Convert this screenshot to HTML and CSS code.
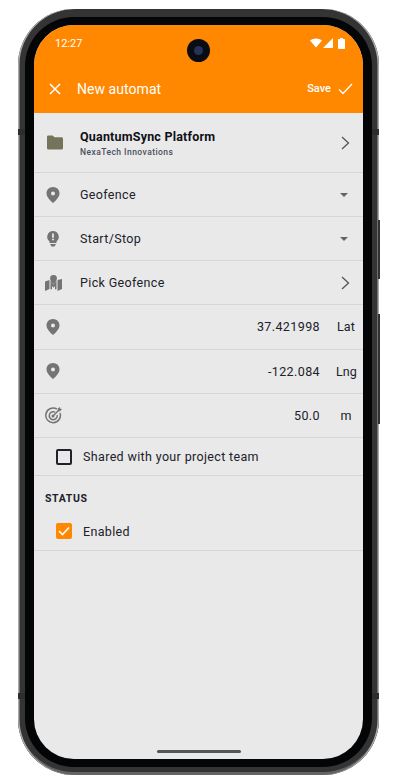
FILE: index.html
```html
<!DOCTYPE html>
<html lang="en">

<head>
    <meta charset="UTF-8">
    <meta name="viewport" content="width=device-width, initial-scale=1.0">
    <title>New automat</title>
    <link rel="stylesheet" href="styles.css">
</head>

<body>
    <div class="phone">
        <span class="tick tickLeftTop"></span>
        <span class="tick tickRightTop"></span>
        <span class="tick tickLeftBottom"></span>
        <span class="tick tickRightBottom"></span>
        <span class="sideBttn powerBttn"></span>
        <span class="sideBttn volumeBttn"></span>
        <div class="bezel">
            <main class="screen">
                <header class="appBar">
                    <div class="statusBar">
                        <span class="clock">12:27</span>
                        <span class="camera"><span class="lens"></span></span>
                        <span class="statusIcons">
                            <svg class="wifiIcon" width="12" height="10" viewBox="0 0 13 10"><path d="M0 2.200C3.600-.7 9.400-.7 13 2.200L6.500 10z" fill="#fff"/></svg>
                            <svg class="signalIcon" width="10" height="10" viewBox="0 0 10 10"><path d="M10 0v10H0z" fill="#fff"/></svg>
                            <svg width="7" height="11" viewBox="0 0 7 11"><path d="M2 1V0h3v1h1.200q.8 0 .8.800V10.200q0 .8-.8.800H.8q-.8 0-.8-.8V1.800Q0 1 .8 1z" fill="#fff"/></svg>
                        </span>
                    </div>
                    <div class="toolBar">
                        <svg class="closeIcon" width="12" height="12" viewBox="0 0 12 12"><path d="M1 1l10 10M11 1L1 11" stroke="#fff" stroke-width="1.500" fill="none"/></svg>
                        <span class="barTitle">New automat</span>
                        <span class="saveLabel">Save</span>
                        <svg class="saveIcon" width="15" height="12" viewBox="0 0 15 12"><path d="M1 6.500L5 10.500L14 1" stroke="#fff" stroke-width="1.300" fill="none"/></svg>
                    </div>
                </header>

                <section class="row projectRow">
                    <svg class="rowIcon folderIcon" width="16" height="15" viewBox="0 0 17 15"><path d="M1.500 0H6l2 2h7.500Q17 2 17 3.500v10q0 1.500-1.500 1.500h-14Q0 15 0 13.500v-12Q0 0 1.500 0z" fill="#74745a"/></svg>
                    <div class="rowBody">
                        <div class="projectName">QuantumSync Platform</div>
                        <div class="projectOrg">NexaTech Innovations</div>
                    </div>
                    <svg class="chevron" width="9" height="14" viewBox="0 0 9 14"><path d="M1 1l6.500 6L1 13" stroke="#555" stroke-width="1.300" fill="none"/></svg>
                </section>

                <section class="row">
                    <svg class="rowIcon pinIcon" width="14" height="16" viewBox="0 0 14 16"><path class="pin" fill-rule="evenodd" d="M7 0c3.700 0 6.500 2.800 6.500 6.300C13.500 10 10 13.500 7 16 4 13.500.5 10 .5 6.300.5 2.800 3.300 0 7 0zm0 4.400a2 2 0 1 0 0 4 2 2 0 0 0 0-4z"/></svg>
                    <span class="rowBody rowLabel">Geofence</span>
                    <span class="caret"></span>
                </section>

                <section class="row">
                    <svg class="rowIcon pinIcon" width="14" height="16" viewBox="0 0 14 16"><path class="pin" fill-rule="evenodd" d="M7 0a5.800 5.800 0 0 1 3.500 10.400V12h-7v-1.600A5.800 5.800 0 0 1 7 0zM6.100 2.600v4.200h1.800V2.600zm0 5.200v1.500h1.800V7.800zM4 13h6l-1.500 2.500h-3z"/></svg>
                    <span class="rowBody rowLabel">Start/Stop</span>
                    <span class="caret"></span>
                </section>

                <section class="row">
                    <svg class="rowIcon wideIcon" width="17" height="16" viewBox="0 0 17 16"><path class="pin" d="M0 6.500l4.500-1.500v9L0 16zM12.500 5l4.500-1v10l-4.500 2zM5.500 5.500l3 4 3-4V14l-1.500.6V11L8.500 12.800 7 11v3.600l-1.500-.6z"/><path class="pin" d="M8.500 0a3.400 3.400 0 0 1 3.400 3.400c0 2-1.900 4.200-3.400 5.600C7 7.600 5.100 5.400 5.100 3.400A3.400 3.400 0 0 1 8.500 0z"/></svg>
                    <span class="rowBody rowLabel">Pick Geofence</span>
                    <svg class="chevron" width="9" height="14" viewBox="0 0 9 14"><path d="M1 1l6.500 6L1 13" stroke="#555" stroke-width="1.300" fill="none"/></svg>
                </section>

                <section class="row latRow">
                    <svg class="rowIcon pinIcon" width="14" height="16" viewBox="0 0 14 16"><path class="pin" fill-rule="evenodd" d="M7 0c3.700 0 6.500 2.800 6.500 6.300C13.500 10 10 13.500 7 16 4 13.500.5 10 .5 6.300.5 2.800 3.300 0 7 0zm0 4.400a2 2 0 1 0 0 4 2 2 0 0 0 0-4z"/></svg>
                    <span class="rowBody rowValue">37.421998</span>
                    <span class="rowUnit">Lat</span>
                </section>

                <section class="row lngRow">
                    <svg class="rowIcon pinIcon" width="14" height="16" viewBox="0 0 14 16"><path class="pin" fill-rule="evenodd" d="M7 0c3.700 0 6.500 2.800 6.500 6.300C13.500 10 10 13.500 7 16 4 13.500.5 10 .5 6.300.5 2.800 3.300 0 7 0zm0 4.400a2 2 0 1 0 0 4 2 2 0 0 0 0-4z"/></svg>
                    <span class="rowBody rowValue">-122.084</span>
                    <span class="rowUnit">Lng</span>
                </section>

                <section class="row">
                    <svg class="rowIcon wideIcon" width="17" height="17" viewBox="0 0 17 17"><g fill="none" stroke="#747474" stroke-width="1.500"><path d="M12 2.200A7.300 7.300 0 1 0 15 6"/><path d="M10.200 5.200A4 4 0 1 0 12.200 8"/><path d="M8 9l7-7"/></g><circle class="pin" cx="8" cy="9" r="1.500"/><path class="pin" d="M12.800 1.500L15 0l.3 1.700L17 2l-2 2.200h-2.200z"/></svg>
                    <span class="rowBody rowValue">50.0</span>
                    <span class="rowUnit">m</span>
                </section>

                <section class="row checkRow">
                    <span class="checkBox"></span>
                    <span class="rowLabel">Shared with your project team</span>
                </section>

                <h2 class="groupTitle">STATUS</h2>

                <section class="row checkRow enabledRow">
                    <span class="checkBox checked">
                        <svg width="12" height="10" viewBox="0 0 12 10"><path d="M1 5l3.500 3.500L11 1.500" stroke="#fff" stroke-width="1.600" fill="none"/></svg>
                    </span>
                    <span class="rowLabel">Enabled</span>
                </section>

                <div class="homeBar"></div>
            </main>
        </div>
    </div>
</body>

</html>
```

FILE: styles.css
```css
* {
    box-sizing: border-box;
}

body {
    margin: 0;
    background-color: rgb(255, 255, 255);
    font-family: Roboto, "Liberation Sans", sans-serif;
    color: rgb(32, 33, 42);
}

.phone {
    position: relative;
    width: 361px;
    height: 766px;
    margin: 9px 0 0 18px;
    padding: 8px 7px;
    border-radius: 56px;
    background-color: rgb(52, 52, 52);
    box-shadow: inset 1.5px 0 0 rgb(170, 170, 170), inset -1.5px 0 0 rgb(170, 170, 170), inset 0 -3px 0 rgb(100, 100, 100);
}

.bezel {
    height: 100%;
    padding: 8px 9px;
    border-radius: 49px;
    background-color: rgb(4, 5, 7);
}

.screen {
    position: relative;
    display: flex;
    flex-direction: column;
    height: 100%;
    overflow: hidden;
    border-radius: 40px;
    background-color: rgb(233, 233, 233);
}

/* small marks and buttons on the frame */
.tick {
    position: absolute;
    width: 7px;
    height: 6px;
    background-color: rgb(45, 45, 45);
}

.tickLeftTop { left: 0; top: 120px; }
.tickRightTop { right: 0; top: 120px; }
.tickLeftBottom { left: 0; top: 684px; }
.tickRightBottom { right: 0; top: 684px; }

.sideBttn {
    position: absolute;
    right: -1px;
    width: 2px;
    background-color: rgb(50, 50, 50);
}

.powerBttn { top: 211px; height: 59px; }
.volumeBttn { top: 305px; height: 110px; }

/* orange header */
.appBar {
    flex: none;
    height: 88px;
    background-color: rgb(255, 136, 0);
    color: rgb(255, 255, 255);
}

.statusBar {
    position: relative;
    display: flex;
    align-items: center;
    justify-content: space-between;
    height: 36px;
    padding: 0 18px 0 21px;
}

.clock {
    font-size: 11px;
}

.camera {
    position: absolute;
    left: 153px;
    top: 14px;
    display: flex;
    align-items: center;
    justify-content: center;
    width: 23px;
    height: 23px;
    border-radius: 50%;
    background-color: rgb(10, 12, 20);
}

.lens {
    width: 9px;
    height: 9px;
    border-radius: 50%;
    background-color: rgb(38, 50, 92);
}

.statusIcons {
    display: flex;
    align-items: center;
}

.wifiIcon {
    margin-right: 1px;
}

.signalIcon {
    margin-right: 5px;
}

.toolBar {
    display: flex;
    align-items: center;
    height: 52px;
    padding: 3px 7px 0 15px;
}

.closeIcon {
    margin-right: 16px;
}

.barTitle {
    flex: 1;
    font-size: 14px;
    letter-spacing: 0.05px;
}

.saveLabel {
    margin-right: 7px;
    font-size: 11px;
    font-weight: 500;
}

.saveIcon {
    margin-right: 3px;
}

/* rows */
.row {
    flex: none;
    display: flex;
    align-items: center;
    height: 44px;
    padding: 0 7px 0 11px;
    border-bottom: 1px solid rgb(214, 214, 214);
}

.projectRow {
    height: 60px;
}

.latRow {
    height: 45px;
    padding-bottom: 1px;
}

.lngRow {
    padding-bottom: 1px;
}

.rowIcon {
    flex: none;
}

.folderIcon {
    margin: 0 17px 0 2px;
}

.pinIcon {
    margin: 0 20px 0 1px;
}

.wideIcon {
    margin-right: 18px;
}

.rowBody {
    flex: 1;
}

.pin {
    fill: rgb(116, 116, 116);
}

.projectName {
    font-size: 12.5px;
    font-weight: 700;
    letter-spacing: 0.2px;
    color: rgb(15, 16, 24);
}

.projectOrg {
    margin-top: 3px;
    font-size: 8.5px;
    font-weight: 500;
    letter-spacing: 0.45px;
    color: rgb(75, 78, 92);
}

.rowLabel {
    font-size: 12.5px;
    letter-spacing: 0.35px;
}

.rowValue {
    padding-right: 16px;
    font-size: 12.5px;
    letter-spacing: 0.4px;
    text-align: right;
}

.rowUnit {
    flex: none;
    width: 20px;
    font-size: 12.5px;
    letter-spacing: 0.1px;
    text-align: center;
}

.chevron {
    flex: none;
    margin-right: 6px;
}

.caret {
    flex: none;
    width: 0;
    height: 0;
    margin-right: 8px;
    border-left: 4px solid transparent;
    border-right: 4px solid transparent;
    border-top: 4px solid rgb(100, 100, 100);
}

.checkRow {
    height: 38px;
    padding-left: 22px;
}

.checkBox {
    flex: none;
    display: flex;
    align-items: center;
    justify-content: center;
    width: 16px;
    height: 16px;
    margin-right: 11px;
    border: 2px solid rgb(32, 33, 42);
    border-radius: 2px;
}

.checked {
    border: none;
    background-color: rgb(255, 136, 0);
}

.groupTitle {
    flex: none;
    height: 36px;
    margin: 0;
    padding: 16px 11px 0;
    font-size: 10.5px;
    font-weight: 700;
    letter-spacing: 0.65px;
}

.enabledRow {
    height: 39px;
}

.homeBar {
    position: absolute;
    left: 123px;
    bottom: 6px;
    width: 84px;
    height: 3px;
    border-radius: 2px;
    background-color: rgb(85, 85, 85);
}
```
